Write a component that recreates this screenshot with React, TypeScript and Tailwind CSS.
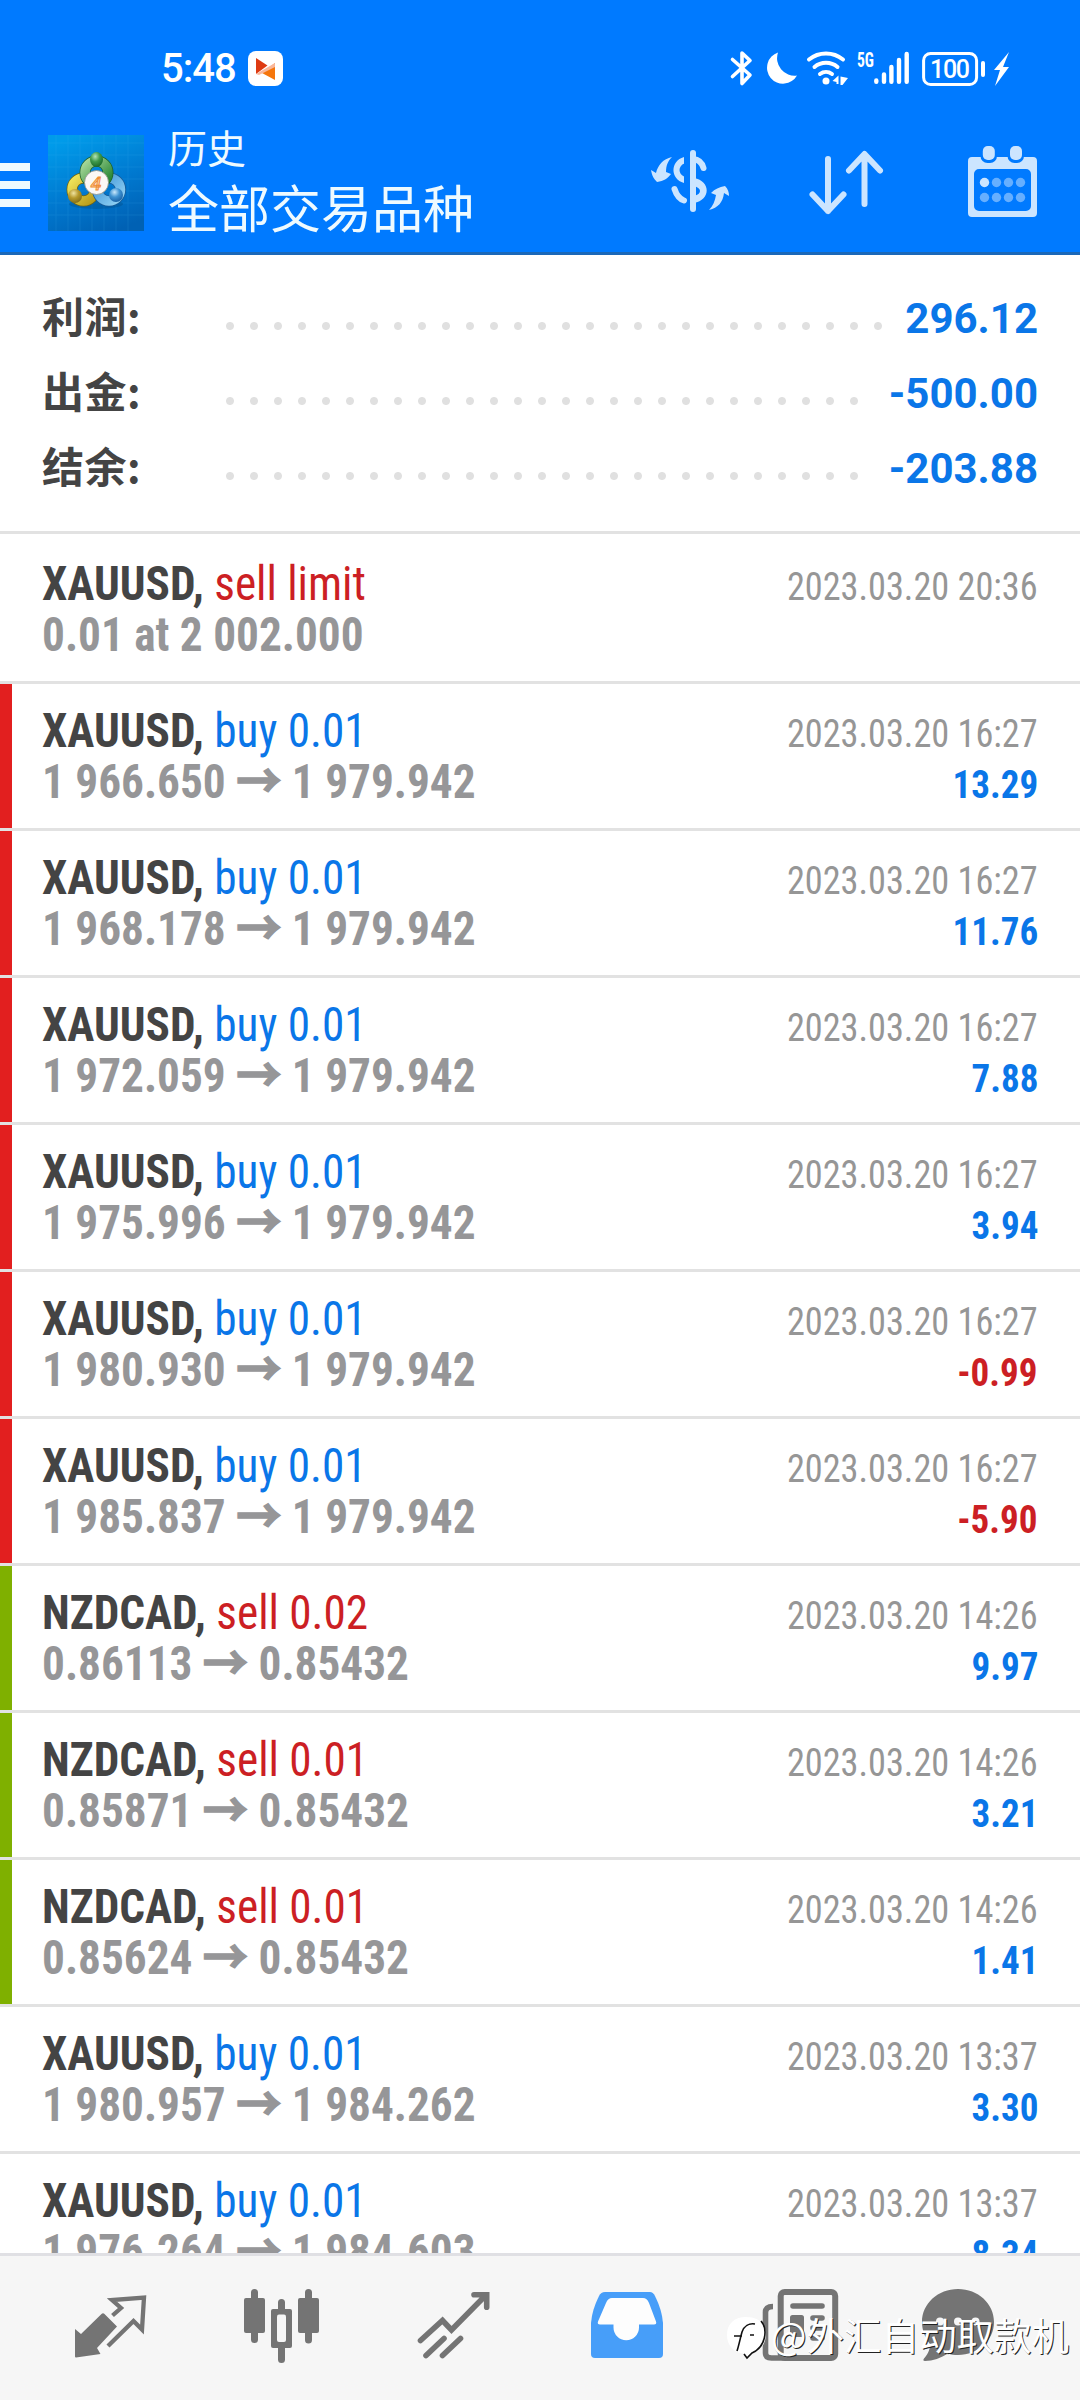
import type { ReactNode } from 'react';
import clsx from 'clsx';

type Deal = {
  symbol: string;
  side: 'buy' | 'sell';
  action: string;
  open: string;
  close?: string;
  time: string;
  profit?: string;
  mark?: 'red' | 'green';
};

const SUMMARY = [
  { label: '利润:', value: '296.12', dots: 'w-[672px]' },
  { label: '出金:', value: '-500.00', dots: 'w-[648px]' },
  { label: '结余:', value: '-203.88', dots: 'w-[648px]' },
];

const DEALS: Deal[] = [
  { symbol: 'XAUUSD', side: 'sell', action: 'sell limit', open: '0.01 at 2 002.000', time: '2023.03.20 20:36' },
  { symbol: 'XAUUSD', side: 'buy', action: 'buy 0.01', open: '1 966.650', close: '1 979.942', time: '2023.03.20 16:27', profit: '13.29', mark: 'red' },
  { symbol: 'XAUUSD', side: 'buy', action: 'buy 0.01', open: '1 968.178', close: '1 979.942', time: '2023.03.20 16:27', profit: '11.76', mark: 'red' },
  { symbol: 'XAUUSD', side: 'buy', action: 'buy 0.01', open: '1 972.059', close: '1 979.942', time: '2023.03.20 16:27', profit: '7.88', mark: 'red' },
  { symbol: 'XAUUSD', side: 'buy', action: 'buy 0.01', open: '1 975.996', close: '1 979.942', time: '2023.03.20 16:27', profit: '3.94', mark: 'red' },
  { symbol: 'XAUUSD', side: 'buy', action: 'buy 0.01', open: '1 980.930', close: '1 979.942', time: '2023.03.20 16:27', profit: '-0.99', mark: 'red' },
  { symbol: 'XAUUSD', side: 'buy', action: 'buy 0.01', open: '1 985.837', close: '1 979.942', time: '2023.03.20 16:27', profit: '-5.90', mark: 'red' },
  { symbol: 'NZDCAD', side: 'sell', action: 'sell 0.02', open: '0.86113', close: '0.85432', time: '2023.03.20 14:26', profit: '9.97', mark: 'green' },
  { symbol: 'NZDCAD', side: 'sell', action: 'sell 0.01', open: '0.85871', close: '0.85432', time: '2023.03.20 14:26', profit: '3.21', mark: 'green' },
  { symbol: 'NZDCAD', side: 'sell', action: 'sell 0.01', open: '0.85624', close: '0.85432', time: '2023.03.20 14:26', profit: '1.41', mark: 'green' },
  { symbol: 'XAUUSD', side: 'buy', action: 'buy 0.01', open: '1 980.957', close: '1 984.262', time: '2023.03.20 13:37', profit: '3.30' },
  { symbol: 'XAUUSD', side: 'buy', action: 'buy 0.01', open: '1 976.264', close: '1 984.603', time: '2023.03.20 13:37', profit: '8.34' },
];

function StatusBar() {
  return (
    <div className="flex h-[120px] items-start pl-[161px] pr-[70px] pt-[50px] text-white">
      <span className="w-[87px] font-['Roboto'] text-[40px] font-medium leading-[38px] tracking-[-1px]">5:48</span>
      {/* Running app badge */}
      <svg className="mt-px h-[35px] w-[35px]" viewBox="0 0 35 35">
        <rect width="35" height="35" rx="8" fill="#fff" />
        <path d="M8 7l11.500 7.500L8 23z" fill="#de3a12" />
        <path d="M27 12v17l-13-7z" fill="#f5760c" />
        <path d="M8 23L27 12v4L11 24z" fill="#f9b79a" />
      </svg>
      <svg className="ml-auto h-[40px] w-[282px]" viewBox="0 0 282 40" fill="none" stroke="#fff">
        {/* Bluetooth */}
        <path d="M4.500 9.500L22 25l-8 8.500V3L22 10.500l-17.500 16" strokeWidth="3.600" strokeLinejoin="round" strokeLinecap="round" />
        {/* Do not disturb */}
        <path d="M50 2.500A16 16 0 1 0 69 25.500 17.500 17.500 0 0 1 50 2.500z" fill="#fff" stroke="none" />
        {/* Wifi */}
        <g strokeWidth="4" strokeLinecap="round">
          <path d="M81 9.500a27 27 0 0 1 34 0" />
          <path d="M86.500 17a18 18 0 0 1 23 0" />
          <path d="M92 24a10 10 0 0 1 12 0" />
        </g>
        <circle cx="98" cy="31" r="3.500" fill="#fff" stroke="none" />
        <path d="M104.500 31l6-5.500v8.500h-2v-2zM112.500 26.500l7.500 1.500-5.500 7h-2z" fill="#fff" stroke="none" />
        {/* Signal strength */}
        <g strokeWidth="4.400" strokeLinecap="round">
          <path d="M148.300 30.500v1.200M156 24.500v7.200M163.400 17v14.700M171 10v21.700M178.700 4v27.700" />
        </g>
        {/* Battery */}
        <rect x="195.600" y="3.500" width="53" height="31" rx="7" strokeWidth="3" />
        <path d="M255 13v12" strokeWidth="4" strokeLinecap="round" />
        <path d="M281 2l-15 18h6l-5 16 14-19h-6z" fill="#fff" stroke="none" />
        <text x="129" y="17" fill="#fff" stroke="none" fontSize="21" fontWeight="700" className="font-['Roboto_Condensed']" textLength="17" lengthAdjust="spacingAndGlyphs">5G</text>
        <text x="202" y="28" fill="#fff" stroke="none" fontSize="25" fontWeight="500" className="font-['Roboto']" textLength="40">100</text>
      </svg>
    </div>
  );
}

function AppLogo() {
  return (
    <svg className="h-24 w-24" viewBox="0 0 96 96">
      <defs>
        <linearGradient id="logoBg" x1="0.300" y1="0" x2="0.700" y2="1">
          <stop offset="0" stopColor="#009bea" />
          <stop offset="0.550" stopColor="#0078cf" />
          <stop offset="1" stopColor="#0061b4" />
        </linearGradient>
        <linearGradient id="logoGreen" x1="0" y1="0" x2="1" y2="1">
          <stop offset="0" stopColor="#a9d99a" />
          <stop offset="1" stopColor="#21812f" />
        </linearGradient>
        <linearGradient id="logoYellow" x1="0" y1="0" x2="1" y2="1">
          <stop offset="0" stopColor="#efe45a" />
          <stop offset="1" stopColor="#b89a18" />
        </linearGradient>
        <linearGradient id="logoBlue" x1="0" y1="0" x2="1" y2="1">
          <stop offset="0" stopColor="#3d93d6" />
          <stop offset="1" stopColor="#8fd0f3" />
        </linearGradient>
        <radialGradient id="ballGreen" cx="0.400" cy="0.300" r="0.700">
          <stop offset="0" stopColor="#b5e3b8" />
          <stop offset="0.500" stopColor="#3f9a4c" />
          <stop offset="1" stopColor="#1c6b2b" />
        </radialGradient>
        <radialGradient id="ballYellow" cx="0.400" cy="0.300" r="0.700">
          <stop offset="0" stopColor="#efe3a0" />
          <stop offset="0.500" stopColor="#b79a2c" />
          <stop offset="1" stopColor="#84701a" />
        </radialGradient>
        <radialGradient id="ballBlue" cx="0.400" cy="0.300" r="0.700">
          <stop offset="0" stopColor="#c9e8fb" />
          <stop offset="0.500" stopColor="#3f93d2" />
          <stop offset="1" stopColor="#1c64a8" />
        </radialGradient>
      </defs>
      <rect width="96" height="96" fill="url(#logoBg)" />
      <path d="M8 0v96M20 0v96M32 0v96M44 0v96M56 0v96M68 0v96M80 0v96M0 8h96M0 20h96M0 32h96M0 44h96M0 56h96M0 68h96M0 80h96" stroke="#4db8f5" strokeWidth="1" opacity=".15" />
      <ellipse cx="48" cy="69" rx="27" ry="5" fill="#004a80" opacity=".35" />
      <g fill="none" strokeWidth="9.500">
        <circle cx="35.500" cy="54.500" r="11.500" stroke="#6f6412" strokeWidth="11" />
        <circle cx="35.500" cy="54.500" r="11.500" stroke="url(#logoYellow)" />
        <circle cx="61" cy="54.500" r="11.500" stroke="#1a5a94" strokeWidth="11" />
        <circle cx="61" cy="54.500" r="11.500" stroke="url(#logoBlue)" />
        <circle cx="48.500" cy="37.500" r="11.500" stroke="#1c5f2c" strokeWidth="11" />
        <circle cx="48.500" cy="37.500" r="11.500" stroke="url(#logoGreen)" />
      </g>
      <ellipse cx="48.500" cy="24.500" rx="6.500" ry="7.500" fill="url(#ballGreen)" />
      <circle cx="27" cy="61" r="7" fill="url(#ballYellow)" />
      <circle cx="68" cy="60" r="7" fill="url(#ballBlue)" />
      <circle cx="48.500" cy="47.500" r="12" fill="#fbf8f5" stroke="#8b8f86" strokeWidth="0.800" />
      <text x="48" y="54.500" textAnchor="middle" fontSize="19" fontWeight="500" fontStyle="italic" fill="#fbd09a" stroke="#ee8a34" strokeWidth="0.900" className="font-['Roboto']">4</text>
    </svg>
  );
}

function Header() {
  return (
    <header className="h-[255px] shrink-0 border-b-[3px] border-[#1b68b8] bg-[#007aff]">
      <StatusBar />
      <div className="flex h-[126px] items-start">
        {/* Drawer button */}
        <div className="mt-[43px] flex w-[30px] flex-col gap-[10px]">
          <span className="h-2 bg-[#eefaff]" />
          <span className="h-2 bg-[#eefaff]" />
          <span className="h-2 bg-[#eefaff]" />
        </div>
        <div className="ml-[18px] mt-[15px]">
          <AppLogo />
        </div>
        <div className="ml-6 font-['Noto_Sans_CJK_SC',sans-serif] text-[#eefaff]">
          <div className="mt-[2px] text-[39px] leading-[48px]">历史</div>
          <div className="mt-[6px] text-[51px] leading-[60px]">全部交易品种</div>
        </div>
        <div className="ml-auto mr-[43px] mt-[20px] flex">
          {/* Currency */}
          <svg className="mt-[4px] h-20 w-20" viewBox="0 0 80 80" fill="#cce5ff">
            <path d="M0 26l5 3C7 21 12 15 21 13c-4 4-6 8-6 15l5 2c-4 5-7 7-14 8-3-3-5-6-6-12z" />
            <path d="M78 52l-5-3c-1 9-6 15-15 17 4-4 6-9 7-15l-5-2c4-4 8-6 14-7 3 3 4 6 4 10z" />
            <path d="M42 9v56" stroke="#cce5ff" strokeWidth="6" strokeLinecap="round" />
            <path d="M33 13v26c-14-4-14-22 0-26zM33 19.500c-6 3-6 10 0 13z" fillRule="evenodd" />
            <path d="M23.500 45c2 6 5 10 9.500 11.500" stroke="#cce5ff" strokeWidth="6" strokeLinecap="round" fill="none" />
            <path d="M42 15c6 .5 9 3.500 10.500 9" stroke="#cce5ff" strokeWidth="6" strokeLinecap="round" fill="none" />
            <path d="M43 34c17 3 17 22 0 25v-7c8-2 8-8 0-10z" />
          </svg>
          {/* Sort order */}
          <svg className="ml-[78px] h-20 w-20" viewBox="0 0 80 80" fill="none" stroke="#cce5ff" strokeWidth="6" strokeLinecap="round" strokeLinejoin="round">
            <path d="M19 19v52M3.500 54.500L19 71l15.500-16.500" />
            <path d="M55.500 64V15M40 30.500L55.500 14 71 30.500" />
          </svg>
          {/* Period */}
          <svg className="ml-[79px] h-20 w-[69px]" viewBox="0 0 69 80">
            <path d="M4 17h61a4 4 0 0 1 4 4v52a4 4 0 0 1-4 4H4a4 4 0 0 1-4-4V21a4 4 0 0 1 4-4zM11 29a5 5 0 0 0-5 5v32a5 5 0 0 0 5 5h47a5 5 0 0 0 5-5V34a5 5 0 0 0-5-5z" fill="#cce5ff" fillRule="evenodd" />
            <rect x="12.500" y="3" width="16.500" height="20" rx="7" fill="#007aff" />
            <rect x="39.500" y="3" width="16.500" height="20" rx="7" fill="#007aff" />
            <rect x="14.800" y="6" width="12" height="14" rx="5" fill="#cce5ff" />
            <rect x="42" y="6" width="12" height="14" rx="5" fill="#cce5ff" />
            <circle cx="16.500" cy="42.500" r="4.700" fill="#cce5ff" />
            <g fill="#66afff">
              <circle cx="28.500" cy="42.500" r="4.700" />
              <circle cx="40.500" cy="42.500" r="4.700" />
              <circle cx="52.500" cy="42.500" r="4.700" />
              <circle cx="16.500" cy="57.500" r="4.700" />
              <circle cx="28.500" cy="57.500" r="4.700" />
              <circle cx="40.500" cy="57.500" r="4.700" />
              <circle cx="52.500" cy="57.500" r="4.700" />
            </g>
          </svg>
        </div>
      </div>
    </header>
  );
}

function Summary() {
  return (
    <section className="h-[279px] shrink-0 border-b-[3px] border-[#e2e2e2] px-[42px] pt-[26px]">
      {SUMMARY.map((row) => (
        <div key={row.label} className="flex h-[75px] items-center">
          <span className="mb-[8px] w-[176px] font-['Noto_Sans_CJK_SC',sans-serif] text-[42px] font-bold tracking-[0.500px] text-[#444]">
            {row.label}
          </span>
          <span
            className={clsx(
              'mt-[15px] h-6 bg-[radial-gradient(circle,#e0e0e0_3.500px,transparent_4.500px)] bg-[length:24px_24px]',
              row.dots,
            )}
          />
          <span className="ml-auto font-['Roboto'] text-[42px] font-bold text-[#0a76e8]">{row.value}</span>
        </div>
      ))}
    </section>
  );
}

function DealRow({ deal }: { deal: Deal }) {
  return (
    <li className="flex h-[147px] shrink-0 border-b-[3px] border-[#e2e2e2] font-['Roboto_Condensed']">
      <span
        className={clsx('w-3 shrink-0', deal.mark === 'red' && 'bg-[#e21f1f]', deal.mark === 'green' && 'bg-[#7fb000]')}
      />
      <div className="flex-1 pl-[30px] pr-[42px] pt-[21px]">
        <div className="flex h-[51px] items-baseline justify-between leading-[51px]">
          <span className="origin-left scale-x-[.942] whitespace-pre text-[48px]">
            <b className="font-bold text-[#444]">{deal.symbol}, </b>
            <span className={deal.side === 'buy' ? 'text-[#0a76e8]' : 'text-[#cc1f24]'}>{deal.action}</span>
          </span>
          <span className="origin-right scale-x-[.93] text-[39px] text-[#969696]">{deal.time}</span>
        </div>
        <div className="flex h-[51px] items-baseline justify-between font-bold leading-[51px]">
          <span className="origin-left scale-x-[.943] text-[48px] text-[#969698]">
            {deal.open}
            {deal.close && (
              <>
                {' '}
                <span className="font-['Noto_Sans_CJK_SC'] leading-[0] [-webkit-text-stroke:1.500px_#969698]">→</span>{' '}
                {deal.close}
              </>
            )}
          </span>
          {deal.profit && (
            <span
              className={clsx(
                'origin-right scale-x-[.95] text-[39px]',
                deal.profit.startsWith('-') ? 'text-[#cc1f24]' : 'text-[#0a76e8]',
              )}
            >
              {deal.profit}
            </span>
          )}
        </div>
      </div>
    </li>
  );
}

function NavIcon({ children }: { children: ReactNode }) {
  return (
    <svg className="h-24 w-24" viewBox="0 0 96 96" fill="none">
      {children}
    </svg>
  );
}

function BottomNav() {
  return (
    <nav className="relative flex h-[147px] shrink-0 items-start border-t-[3px] border-[#e0e0e4] bg-[#f6f6f6] px-6 pt-6">
      <div className="flex flex-1 justify-around">
        {/* Quotes */}
        <NavIcon>
          <path d="M13 49v27.500a1 1 0 0 0 1 1L38.500 74 35 68l20-21.500L42.500 34a2 2 0 0 0-3 0L19 54z" fill="#747474" />
          <path d="M50.500 35.500L59 28l-9-8 32-2.500-2 32-8.500-8.500L46 66" stroke="#747474" strokeWidth="4.300" />
        </NavIcon>
        {/* Charts */}
        <NavIcon>
          <path d="M20.500 12.500v47M74.500 12.500v47.500M47.500 22.500v8M47.500 66v13.500" stroke="#747474" strokeWidth="7" strokeLinecap="round" />
          <g fill="#747474">
            <rect x="10" y="18" width="21" height="35" rx="2" />
            <rect x="64" y="18" width="21" height="35" rx="2" />
            <rect x="37" y="29" width="21" height="39" rx="2" />
          </g>
          <rect x="43" y="34.500" width="9" height="27.500" rx="2" fill="#f6f6f6" />
        </NavIcon>
        {/* Trade */}
        <NavIcon>
          <path d="M14.500 60.500l22-20 9 9.500 34.500-35M68 14.700h12.700v12.600M20 75.500l18-17M36.500 75.500l18-17" stroke="#747474" strokeWidth="5.600" strokeLinecap="round" />
        </NavIcon>
        {/* History, active */}
        <NavIcon>
          <path d="M27 12h45q3 0 5 4 7 14 8 27v31a4 4 0 0 1-4 4H17a4 4 0 0 1-4-4V43q1-13 8-27 2-4 6-4z" fill="#479ef9" />
          <path d="M34 18h31q4 0 6 5l7 18.500q1 3-2 3H61v3a12.700 12.700 0 0 1-25.500 0v-3H22q-3 0-2-3L28 23q2-5 6-5z" fill="#fdfdfd" />
        </NavIcon>
        {/* News */}
        <NavIcon>
          <rect x="30.700" y="12" width="54.500" height="66" rx="4" stroke="#747474" strokeWidth="6" />
          <path d="M23 26.500q-7.500 0-7.500 6V73q0 5 6 5h14" stroke="#747474" strokeWidth="5.600" />
          <path d="M43 26h29M63 38h9M63 48h9M63 58h9" stroke="#747474" strokeWidth="5.600" strokeLinecap="round" />
          <rect x="40" y="35" width="14" height="22" rx="2.500" fill="#747474" />
        </NavIcon>
        {/* Mailbox */}
        <NavIcon>
          <path d="M36 9c20 0 36 14.500 36 33S56 75 36 75c-4 0-7-.5-10-1.500C19 78 11 81 3 81c-2 0-2-1-1-2.500C5 75 8 71 8 64 3 58 0 50 0 42 0 23.500 16 9 36 9z" fill="#747474" />
          <g fill="#f6f6f6">
            <circle cx="18" cy="41.500" r="4" />
            <circle cx="36" cy="41.500" r="4" />
            <circle cx="53.500" cy="41.500" r="4" />
          </g>
        </NavIcon>
      </div>
      {/* Author tag laid over the tabs */}
      <div className="absolute right-[11px] top-[49px] flex items-center">
        <svg className="-mr-px mt-[10px] h-[48px] w-[46px]" viewBox="0 0 46 48" fill="none">
          <path d="M20 2c12 0 20 6 20 17 0 10-6 17-14 20l-6 5v-5C8 38 1 31 1 20 1 9 8 2 20 2z" fill="#fff" />
          <path d="M35 6c7 8 5 26-9 32l-5 5-3-4" stroke="#111" strokeWidth="1.600" />
          <path d="M11 36c2-6 3-12 5-19 2-6 7-9 13-8M8 21h8M24 20h4" stroke="#111" strokeWidth="1.600" />
        </svg>
        <span className="font-['Noto_Sans_CJK_SC',sans-serif] text-[37.500px] leading-[56px] text-white [text-shadow:1px_1px_0_#222]">
          @外汇自动取款机
        </span>
      </div>
    </nav>
  );
}

export default function App() {
  return (
    <div className="flex h-[2400px] w-[1080px] flex-col overflow-hidden bg-white">
      <Header />
      <Summary />
      <ul className="flex min-h-0 flex-1 flex-col overflow-hidden pt-[3px]">
        {DEALS.map((deal) => (
          <DealRow key={deal.time + deal.open} deal={deal} />
        ))}
      </ul>
      <BottomNav />
    </div>
  );
}
